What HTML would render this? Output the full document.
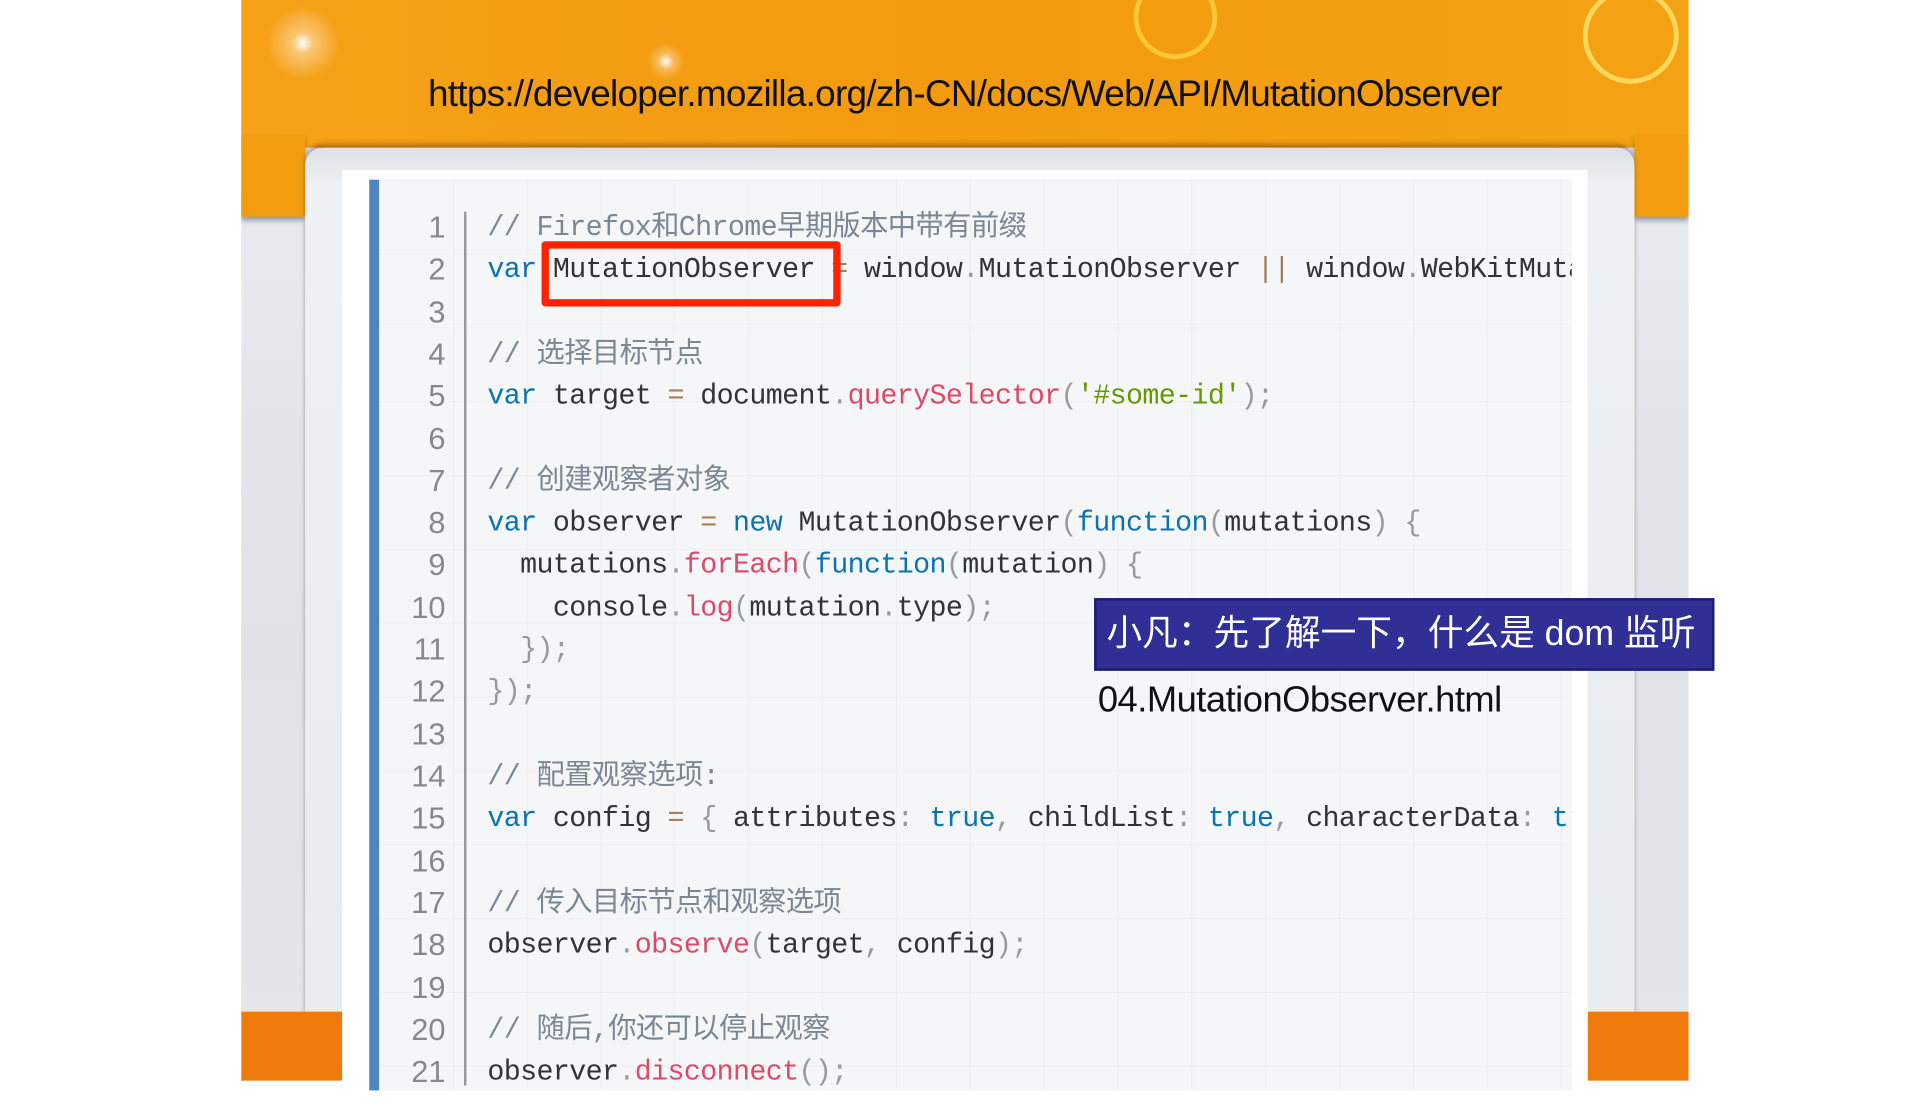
<!DOCTYPE html>
<html><head><meta charset="utf-8"><style>
html,body{margin:0;padding:0;background:#fff;width:1920px;height:1080px;overflow:hidden}
#w{position:absolute;left:0;top:0;width:1560px;height:878px;transform:scale(1.23077);transform-origin:0 0}
.abs{position:absolute}
#slide{left:196px;top:0;width:1176px;height:878px;background:linear-gradient(#e9ecef,#dfe3e7 60%,#e4e7ea);overflow:hidden}
#top{left:0;top:0;width:1176px;height:120px;background:linear-gradient(90deg,#f6a118,#f39a0e 50%,#f4a214)}
#tabL{left:0;top:110px;width:52px;height:66px;background:#f39c10;box-shadow:0 3px 4px rgba(0,0,0,.35)}
#tabR{right:0;top:110px;width:44px;height:66px;background:#f39c10;box-shadow:0 3px 4px rgba(0,0,0,.35)}
#inner{left:52px;top:120px;width:1080px;height:800px;background:linear-gradient(#dde1e5,#eef0f2 30px,#e8ebee);border-radius:14px 14px 0 0;box-shadow:0 -3px 4px rgba(0,0,0,.3)}
#botL{left:0;top:822px;width:82px;height:60px;background:#ee7a0c}
#botR{right:0;top:822px;width:82px;height:60px;background:#ee7a0c}
#url{left:0;width:1176px;top:60px;text-align:center;font:30px "Liberation Sans",sans-serif;color:#111;letter-spacing:-0.6px}
#white{left:278px;top:138px;width:1012px;height:760px;background:#fff}
#code{left:300px;top:146px;width:977px;height:740px;background:#f5f6f8;border-left:8px solid #4f86c0;box-sizing:border-box;
background-image:linear-gradient(90deg,rgba(0,0,0,.025) 1px,transparent 1px),linear-gradient(rgba(0,0,0,.025) 1px,transparent 1px);background-size:60px 60px}
#sep{left:377px;top:172px;width:2px;height:710px;background:#999}
.ln{position:absolute;left:300px;width:62px;text-align:right;font:25px/30px "Liberation Sans Narrow","Liberation Sans",sans-serif;color:#888;margin-top:-2px}
.cl{position:absolute;left:396px;font:23px/30px "Liberation Mono","Noto Sans CJK SC",monospace;color:#333;white-space:pre;letter-spacing:-0.5px}
.k{color:#0a74b0}.c{color:#7a8794}.s{color:#669900}.f{color:#dd4a68}.p{color:#999}.o{color:#a67f59}
#red{left:440px;top:196px;width:231px;height:41px;border:6px solid #ff2200;border-radius:3px}
#sub{left:889px;top:486px;height:55px;background:#2f2f96;border:2px solid #1e1e70;color:#fff;font:29px/55px "Liberation Sans","Noto Sans CJK SC",sans-serif;padding-left:8px;width:492px}
#fn{left:892px;top:552px;font:29.5px "Liberation Sans",sans-serif;color:#111;letter-spacing:-0.4px}
</style></head><body><div id="w">
<div id="slide" class="abs">
<div id="top" class="abs"></div>
<div class="abs" style="left:20px;top:5px;width:60px;height:60px;border-radius:50%;background:radial-gradient(#fff 0,rgba(255,255,255,.4) 20%,transparent 70%)"></div>
<div class="abs" style="left:330px;top:35px;width:30px;height:30px;border-radius:50%;background:radial-gradient(#fff 0,rgba(255,255,255,.3) 30%,transparent 70%)"></div>
<div class="abs" style="left:725px;top:-20px;width:60px;height:60px;border-radius:50%;border:4px solid rgba(255,230,80,.6)"></div>
<div class="abs" style="left:1090px;top:-10px;width:70px;height:70px;border-radius:50%;border:4px solid rgba(255,240,120,.7)"></div>
<div id="tabL" class="abs"></div><div id="tabR" class="abs"></div>
<div id="inner" class="abs"></div>
<div id="botL" class="abs"></div><div id="botR" class="abs"></div>
<div id="url" class="abs">https://developer.mozilla.org/zh-CN/docs/Web/API/MutationObserver</div>
</div>
<div id="white" class="abs"></div>
<div id="code" class="abs"></div>
<div id="sep" class="abs"></div>
<div class="ln" style="top:172px">1</div>
<div class="ln" style="top:206px">2</div>
<div class="ln" style="top:241px">3</div>
<div class="ln" style="top:275px">4</div>
<div class="ln" style="top:309px">5</div>
<div class="ln" style="top:344px">6</div>
<div class="ln" style="top:378px">7</div>
<div class="ln" style="top:412px">8</div>
<div class="ln" style="top:446px">9</div>
<div class="ln" style="top:481px">10</div>
<div class="ln" style="top:515px">11</div>
<div class="ln" style="top:549px">12</div>
<div class="ln" style="top:584px">13</div>
<div class="ln" style="top:618px">14</div>
<div class="ln" style="top:652px">15</div>
<div class="ln" style="top:687px">16</div>
<div class="ln" style="top:721px">17</div>
<div class="ln" style="top:755px">18</div>
<div class="ln" style="top:790px">19</div>
<div class="ln" style="top:824px">20</div>
<div class="ln" style="top:858px">21</div>
<div class="cl c" style="top:170px">// Firefox和Chrome早期版本中带有前缀</div>
<div class="cl" style="top:204px;width:881px;overflow:hidden"><span class="k">var</span> MutationObserver <span class="o">=</span> window<span class="p">.</span>MutationObserver <span class="o">||</span> window<span class="p">.</span>WebKitMutationObserver</div>
<div class="cl c" style="top:273px">// 选择目标节点</div>
<div class="cl" style="top:307px"><span class="k">var</span> target <span class="o">=</span> document<span class="p">.</span><span class="f">querySelector</span><span class="p">(</span><span class="s">'#some-id'</span><span class="p">);</span></div>
<div class="cl c" style="top:376px">// 创建观察者对象</div>
<div class="cl" style="top:410px"><span class="k">var</span> observer <span class="o">=</span> <span class="k">new</span> MutationObserver<span class="p">(</span><span class="k">function</span><span class="p">(</span>mutations<span class="p">) {</span></div>
<div class="cl" style="top:444px">  mutations<span class="p">.</span><span class="f">forEach</span><span class="p">(</span><span class="k">function</span><span class="p">(</span>mutation<span class="p">) {</span></div>
<div class="cl" style="top:479px">    console<span class="p">.</span><span class="f">log</span><span class="p">(</span>mutation<span class="p">.</span>type<span class="p">);</span></div>
<div class="cl p" style="top:513px">  });</div>
<div class="cl p" style="top:547px">});</div>
<div class="cl c" style="top:616px">// 配置观察选项:</div>
<div class="cl" style="top:650px;width:881px;overflow:hidden"><span class="k">var</span> config <span class="o">=</span> <span class="p">{</span> attributes<span class="p">:</span> <span class="k">true</span><span class="p">,</span> childList<span class="p">:</span> <span class="k">true</span><span class="p">,</span> characterData<span class="p">:</span> <span class="k">true</span> <span class="p">}</span></div>
<div class="cl c" style="top:719px">// 传入目标节点和观察选项</div>
<div class="cl" style="top:753px">observer<span class="p">.</span><span class="f">observe</span><span class="p">(</span>target<span class="p">,</span> config<span class="p">);</span></div>
<div class="cl c" style="top:822px">// 随后,你还可以停止观察</div>
<div class="cl" style="top:856px">observer<span class="p">.</span><span class="f">disconnect</span><span class="p">();</span></div>
<div id="red" class="abs"></div>
<div id="sub" class="abs">小凡：先了解一下，什么是 dom 监听</div>
<div id="fn" class="abs">04.MutationObserver.html</div>
</div></body></html>
